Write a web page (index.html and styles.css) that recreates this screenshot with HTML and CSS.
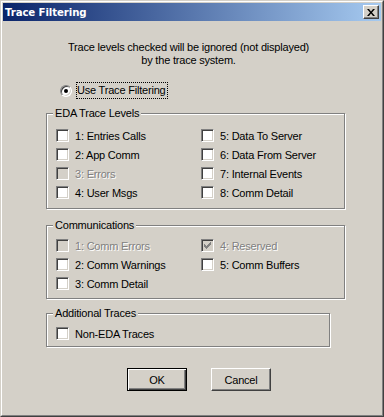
FILE: index.html
```html
<!DOCTYPE html>
<html lang="en">
<head>
    <meta charset="UTF-8">
    <title>Trace Filtering</title>
    <link rel="stylesheet" href="styles.css">
</head>
<body>
    <div class="window">
        <div class="frame">
            <div class="titlebar">
                <span class="title">Trace Filtering</span>
                <span class="close-btn">
                    <svg width="8" height="7" viewBox="0 0 8 7">
                        <path d="M0 0h2l2 2.4 2-2.4h2l-3 3.5 3 3.5h-2l-2-2.4-2 2.4h-2l3-3.5z" fill="#000"/>
                    </svg>
                </span>
            </div>

            <div class="body">
                <p class="intro">Trace levels checked will be ignored (not displayed)<br>by the trace system.</p>

                <div class="radio-row">
                    <span class="radio"></span>
                    <span class="focus">Use Trace Filtering</span>
                </div>

                <fieldset class="group eda">
                    <legend>EDA Trace Levels</legend>
                    <div class="grid rows-4">
                        <label class="check"><span class="box"></span>1: Entries Calls</label>
                        <label class="check"><span class="box"></span>2: App Comm</label>
                        <label class="check disabled"><span class="box"></span>3: Errors</label>
                        <label class="check"><span class="box"></span>4: User Msgs</label>
                        <label class="check"><span class="box"></span>5: Data To Server</label>
                        <label class="check"><span class="box"></span>6: Data From Server</label>
                        <label class="check"><span class="box"></span>7: Internal Events</label>
                        <label class="check"><span class="box"></span>8: Comm Detail</label>
                    </div>
                </fieldset>

                <fieldset class="group comm">
                    <legend>Communications</legend>
                    <div class="grid rows-3">
                        <label class="check disabled"><span class="box"></span>1: Comm Errors</label>
                        <label class="check"><span class="box"></span>2: Comm Warnings</label>
                        <label class="check"><span class="box"></span>3: Comm Detail</label>
                        <label class="check disabled"><span class="box checked">
                            <svg width="7" height="7" viewBox="0 0 7 7"><path d="M0 2h1v1h1v1h1v-1h1v-1h1v-1h1v-1h1v3h-1v1h-1v1h-1v1h-1v1h-1v-1h-1v-1h-1v-1h-1z" fill="#808080"/></svg>
                        </span>4: Reserved</label>
                        <label class="check"><span class="box"></span>5: Comm Buffers</label>
                    </div>
                </fieldset>

                <fieldset class="group extra">
                    <legend>Additional Traces</legend>
                    <div class="grid rows-1">
                        <label class="check"><span class="box"></span>Non-EDA Traces</label>
                    </div>
                </fieldset>

                <div class="buttons">
                    <span class="btn default">OK</span>
                    <span class="btn">Cancel</span>
                </div>
            </div>
        </div>
    </div>
</body>
</html>
```

FILE: styles.css
```css
body {
    margin: 0;
    padding: 0;
    font-family: 'Liberation Sans', Arial, sans-serif;
    font-size: 11px;
    color: #000;
    background-color: #d4d0c8;
}

/* classic 3d window edge: two bevels and a 1px pad */
.window {
    width: 384px;
    height: 417px;
    box-sizing: border-box;
    background-color: #d4d0c8;
    border: 1px solid;
    border-color: #d4d0c8 #404040 #404040 #d4d0c8;
    overflow: hidden;
}

.frame {
    height: 100%;
    box-sizing: border-box;
    border: 1px solid;
    border-color: #fff #808080 #808080 #fff;
    padding: 1px;
}

.titlebar {
    height: 18px;
    display: flex;
    align-items: center;
    justify-content: space-between;
    padding: 0 2px;
    background: linear-gradient(to right, #0a246a, #a6caf0);
}

.title {
    font-family: 'DejaVu Sans', Verdana, sans-serif;
    font-weight: bold;
    font-size: 10.2px;
    color: #fff;
    letter-spacing: -0.1px;
}

.close-btn {
    width: 16px;
    height: 14px;
    box-sizing: border-box;
    display: flex;
    align-items: center;
    justify-content: center;
    background-color: #d4d0c8;
    border: 1px solid;
    border-color: #fff #404040 #404040 #fff;
    box-shadow: inset -1px -1px 0 #808080;
}

.body {
    letter-spacing: -0.2px;
}

.intro {
    margin: 20px 7px 0 0;
    line-height: 13px;
    text-align: center;
}

.radio-row {
    margin: 16px 0 0 57px;
    height: 15px;
    display: flex;
    align-items: center;
    gap: 5px;
}

.radio {
    width: 12px;
    height: 12px;
    box-sizing: border-box;
    border-radius: 50%;
    border: 1px solid;
    border-color: #808080 #fff #fff #808080;
    background-color: #fff;
    box-shadow: inset 1px 1px 0 #404040, inset -1px -1px 0 #d4d0c8;
    display: flex;
    align-items: center;
    justify-content: center;
}

.radio::after {
    content: "";
    width: 4px;
    height: 4px;
    border-radius: 50%;
    background-color: #000;
}

.focus {
    outline: 1px dotted #000;
    padding: 1px 1px 1px 0;
    line-height: 13px;
}

.group {
    box-sizing: border-box;
    width: 299px;
    margin: 9px 0 0 43px;
    padding: 0;
    border: 1px solid #808080;
    box-shadow: inset 1px 1px 0 #fff, 1px 1px 0 #fff;
}

.group legend {
    margin-left: 6px;
    padding: 0 2px;
    line-height: 13px;
    background-color: #d4d0c8;
}

.grid {
    display: grid;
    grid-auto-flow: column;
    grid-template-columns: 145px 1fr;
    padding: 6px 9px 6px;
}

.rows-4 {
    grid-template-rows: repeat(4, 19px);
}

.rows-3 {
    grid-template-rows: repeat(3, 19px);
}

.rows-1 {
    grid-template-rows: 19px;
}

.comm {
    margin-top: 10px;
}

.comm .grid {
    padding: 4px 9px 5px;
}

.extra {
    width: 284px;
    margin-top: 8px;
}

.extra .grid {
    padding: 4px 9px 3px;
}

.check {
    display: flex;
    align-items: center;
    gap: 6px;
    white-space: nowrap;
}

.box {
    width: 13px;
    height: 13px;
    box-sizing: border-box;
    flex-shrink: 0;
    border: 1px solid;
    border-color: #808080 #fff #fff #808080;
    background-color: #fff;
    box-shadow: inset 1px 1px 0 #404040, inset -1px -1px 0 #d4d0c8;
    display: flex;
    align-items: center;
    justify-content: center;
}

.check.disabled {
    color: #808080;
    text-shadow: 1px 1px 0 #fff;
}

.check.disabled .box {
    background-color: #d4d0c8;
}

.buttons {
    display: flex;
    gap: 24px;
    margin: 21px 0 0 124px;
}

.btn {
    width: 60px;
    height: 23px;
    box-sizing: border-box;
    display: flex;
    align-items: center;
    justify-content: center;
    border: 1px solid;
    border-color: #fff #404040 #404040 #fff;
    box-shadow: inset -1px -1px 0 #808080;
}

.btn.default {
    border-color: #000;
    box-shadow: inset 1px 1px 0 #fff, inset -1px -1px 0 #404040, inset -2px -2px 0 #808080;
}
```
